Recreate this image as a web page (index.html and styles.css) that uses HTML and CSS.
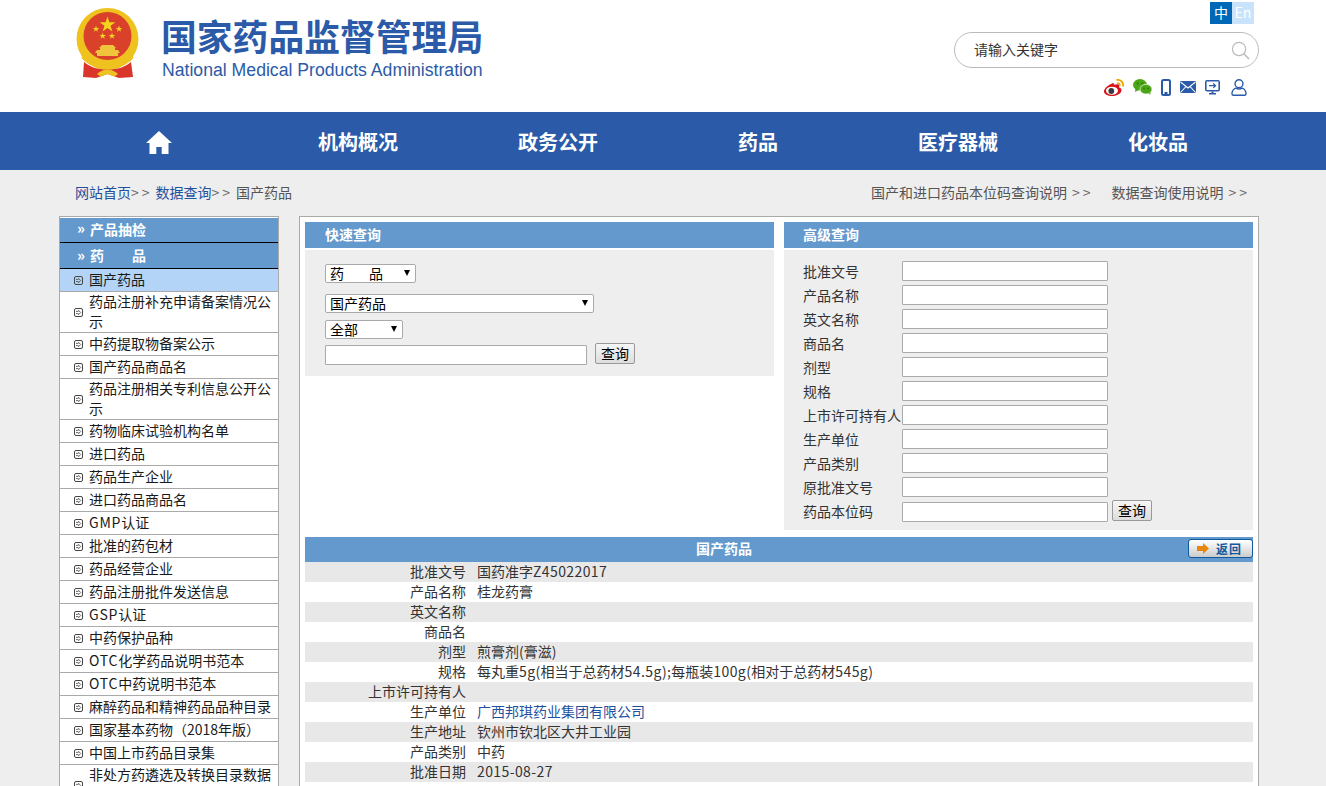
FILE: index.html
```html
<!DOCTYPE html>
<html lang="zh-CN">
<head>
<meta charset="utf-8">
<title>国家药品监督管理局</title>
<link rel="stylesheet" href="styles.css">
</head>
<body>
<svg class="defs" width="0" height="0" aria-hidden="true"><symbol id="go" viewBox="0 0 9 9"><rect x=".5" y=".5" width="8" height="8" rx="1.500" fill="none" stroke="#444"/><path d="M2 3.400h2.500M2 5.600h2.500M4.200 2l2.500 2.500L4.200 7" fill="none" stroke="#444" stroke-width=".8"/></symbol></svg>
<header class="top">
  <div class="brand">
    <svg class="emblem" viewBox="0 0 64 70" aria-hidden="true">
      <circle cx="31.500" cy="31" r="31" fill="#eec21f"/>
      <circle cx="31.500" cy="28" r="24" fill="#d9412b"/>
      <path d="M31.500 8.500l1.900 5.700h6l-4.900 3.500 1.900 5.800-4.900-3.600-4.900 3.600 1.900-5.800-4.900-3.500h6z" fill="#f4d41e"/>
      <path d="M20 17.500l.8 2.400h2.500l-2 1.500.8 2.400-2.100-1.500-2.100 1.500.8-2.400-2-1.500h2.500zM43 17.500l.8 2.400h2.500l-2 1.500.8 2.400-2.100-1.500-2.100 1.500.8-2.400-2-1.500h2.500zM26.700 24.500l.8 2.400h2.500l-2 1.500.8 2.400-2.100-1.500-2.100 1.500.8-2.400-2-1.500h2.500zM36 24.500l.8 2.400h2.500l-2 1.500.8 2.400-2.100-1.500-2.100 1.500.8-2.400-2-1.500h2.500z" fill="#f4d41e"/>
      <path d="M26 37h11l3 3h-1v2h3l2 3H19l2-3h3v-2h-1z" fill="#efc53c"/>
      <path d="M21 45h21v3H21z" fill="#efc53c"/>
      <path d="M7 46c5 7 13 11 24.500 11S51 53 56 46l1.500 4c-6 7-15 10-26 10S11.500 57 5.500 50z" fill="#eec21f"/>
      <path d="M8 54c6 5 13 7.500 23.500 7.500S49 59 55 54l2 15-14 1-11.500-4L20 70 7 69z" fill="#d9352a"/>
      <path d="M21 66c3-3 7-4.500 10.500-4.500S39 63 42 66l-3.500 2.500-7-2.500-7 2.500z" fill="#eec21f"/>
    </svg>
    <div class="brand-text">
      <div class="brand-cn">国家药品监督管理局</div>
      <div class="brand-en">National Medical Products Administration</div>
    </div>
  </div>
  <div class="tools">
    <div class="lang"><a class="lang-cn">中</a><a class="lang-en">En</a></div>
    <div class="search">
      <span class="search-text">请输入关键字</span>
      <svg class="search-icon" viewBox="0 0 20 20" aria-hidden="true"><circle cx="8.500" cy="8.500" r="7" fill="none" stroke="#bbb" stroke-width="1.300"/><path d="M13.500 13.500L19 19" stroke="#bbb" stroke-width="1.600"/></svg>
    </div>
    <div class="icons">
      <svg class="ic ic-weibo" width="21" height="17" viewBox="0 0 21 17" aria-hidden="true"><path d="M8 4.500C4 6 0 9.500 0 12.500 0 15 3.700 17 8 17c5 0 9.500-2.800 9.500-5.800 0-1.700-1.500-2.300-2.500-2.600.5-1.300.5-2.500-.4-3.100-1.200-.7-3.100-.1-4.300.6.100-1.900-.7-2.400-2.300-1.600z" fill="#d8141a"/><ellipse cx="8" cy="11.700" rx="6" ry="4" fill="#fff"/><circle cx="7.300" cy="12" r="2.900" fill="#3a3a3a"/><path d="M12.500 1c3.500-.7 7.500 2 6.500 6.500" fill="none" stroke="#f0a800" stroke-width="1.800"/><path d="M13 4c1.800-.3 3.200 1 2.900 2.800" fill="none" stroke="#f0a800" stroke-width="1.500"/></svg>
      <svg class="ic" width="19" height="16" viewBox="0 0 19 16" aria-hidden="true"><ellipse cx="7" cy="5.800" rx="7" ry="5.800" fill="#4ba516"/><path d="M2.500 9.500L2 13l4-2.200z" fill="#4ba516"/><ellipse cx="13" cy="10.200" rx="6" ry="4.900" fill="#4ba516" stroke="#fff" stroke-width=".7"/><path d="M15.500 14l2 2-.4-3z" fill="#4ba516"/><circle cx="4.700" cy="4.500" r="1" fill="#2f7a08"/><circle cx="9.300" cy="4.500" r="1" fill="#2f7a08"/><circle cx="11" cy="9.500" r=".9" fill="#2f7a08"/><circle cx="15" cy="9.500" r=".9" fill="#2f7a08"/></svg>
      <svg class="ic" width="10" height="17" viewBox="0 0 10 17" aria-hidden="true"><rect x="1" y="1" width="8" height="15" rx="1.500" fill="none" stroke="#2b5ba8" stroke-width="2"/><rect x="3.500" y="13" width="3" height="2.500" fill="#2b5ba8"/></svg>
      <svg class="ic" width="16" height="12" viewBox="0 0 16 12" aria-hidden="true"><rect width="16" height="12" rx="1" fill="#2b5ba8"/><path d="M.5 1L8 7l7.500-6M.5 11.500L6 5.500M15.500 11.500L10 5.500" fill="none" stroke="#fff" stroke-width="1.100"/></svg>
      <svg class="ic" width="15" height="15" viewBox="0 0 15 15" aria-hidden="true"><rect width="15" height="11.500" rx="2" fill="#2b5ba8"/><rect x="1.600" y="1.500" width="11.800" height="8.500" fill="#fff"/><path d="M4 5.700h6.500M8.300 3.500l2.300 2.200-2.300 2.200" fill="none" stroke="#2b5ba8" stroke-width="1.200"/><path d="M6.500 11.500h2V13H11v1.500H4V13h2.500z" fill="#2b5ba8"/></svg>
      <svg class="ic ic-user" width="16" height="17" viewBox="0 0 17 18" aria-hidden="true"><circle cx="8.500" cy="5" r="4.200" fill="none" stroke="#2b5ba8" stroke-width="1.500"/><path d="M1 15.500c0-3.200 2.500-5.400 4-5.800 2 1 5 1 7 0 1.500.4 4 2.600 4 5.800 0 1.500-.8 1.800-1.500 1.800h-12C1.800 17.300 1 17 1 15.500z" fill="none" stroke="#2b5ba8" stroke-width="1.500"/></svg>
    </div>
  </div>
</header>

<nav class="nav">
  <a class="nav-item nav-home"><svg width="26" height="23" viewBox="0 0 26 23" aria-hidden="true"><path d="M13 0L0 12h3.500v11h6.800v-7h5.400v7h6.800V12H26z" fill="#fff"/></svg></a>
  <a class="nav-item">机构概况</a>
  <a class="nav-item">政务公开</a>
  <a class="nav-item">药品</a>
  <a class="nav-item">医疗器械</a>
  <a class="nav-item">化妆品</a>
</nav>

<div class="crumbs">
  <div class="crumbs-left"><a>网站首页</a><span class="sep sep-l">&gt;&gt;</span><a>数据查询</a><span class="sep sep-l">&gt;&gt;</span><em>国产药品</em></div>
  <div class="crumbs-right"><span>国产和进口药品本位码查询说明<span class="sep sep-r">&gt;&gt;</span></span><span>数据查询使用说明<span class="sep sep-r">&gt;&gt;</span></span></div>
</div>

<main class="box">
  <aside class="side">
    <div class="side-head">产品抽检</div>
    <div class="side-head side-head-2">药&emsp;&emsp;品</div>
    <ul class="side-list">
      <li class="on"><svg class="go"><use href="#go"/></svg><span>国产药品</span></li>
      <li><svg class="go"><use href="#go"/></svg><span>药品注册补充申请备案情况公示</span></li>
      <li><svg class="go"><use href="#go"/></svg><span>中药提取物备案公示</span></li>
      <li><svg class="go"><use href="#go"/></svg><span>国产药品商品名</span></li>
      <li><svg class="go"><use href="#go"/></svg><span>药品注册相关专利信息公开公示</span></li>
      <li><svg class="go"><use href="#go"/></svg><span>药物临床试验机构名单</span></li>
      <li><svg class="go"><use href="#go"/></svg><span>进口药品</span></li>
      <li><svg class="go"><use href="#go"/></svg><span>药品生产企业</span></li>
      <li><svg class="go"><use href="#go"/></svg><span>进口药品商品名</span></li>
      <li><svg class="go"><use href="#go"/></svg><span><b class="lat">GMP</b>认证</span></li>
      <li><svg class="go"><use href="#go"/></svg><span>批准的药包材</span></li>
      <li><svg class="go"><use href="#go"/></svg><span>药品经营企业</span></li>
      <li><svg class="go"><use href="#go"/></svg><span>药品注册批件发送信息</span></li>
      <li><svg class="go"><use href="#go"/></svg><span><b class="lat">GSP</b>认证</span></li>
      <li><svg class="go"><use href="#go"/></svg><span>中药保护品种</span></li>
      <li><svg class="go"><use href="#go"/></svg><span><b class="lat">OTC</b>化学药品说明书范本</span></li>
      <li><svg class="go"><use href="#go"/></svg><span><b class="lat">OTC</b>中药说明书范本</span></li>
      <li><svg class="go"><use href="#go"/></svg><span>麻醉药品和精神药品品种目录</span></li>
      <li><svg class="go"><use href="#go"/></svg><span>国家基本药物（2018年版）</span></li>
      <li><svg class="go"><use href="#go"/></svg><span>中国上市药品目录集</span></li>
      <li><svg class="go"><use href="#go"/></svg><span>非处方药遴选及转换目录数据库</span></li>
    </ul>
  </aside>
  <section class="content">
    <div class="panels">
      <div class="panel">
        <h2 class="panel-head">快速查询</h2>
        <form class="quick">
          <div class="sel sel-a"><select><option>药&nbsp;&nbsp;&nbsp;&nbsp;&nbsp;&nbsp;&nbsp;&nbsp;品</option></select></div>
          <div class="sel sel-b"><select><option>国产药品</option></select></div>
          <div class="sel sel-c"><select><option>全部</option></select></div>
          <div class="quick-row"><input class="field field-q" type="text"><button class="btn" type="button">查询</button></div>
        </form>
      </div>
      <div class="panel">
        <h2 class="panel-head panel-head-r">高级查询</h2>
        <form class="adv">
          <label>批准文号</label><input class="field" type="text"><i></i>
          <label>产品名称</label><input class="field" type="text"><i></i>
          <label>英文名称</label><input class="field" type="text"><i></i>
          <label>商品名</label><input class="field" type="text"><i></i>
          <label>剂型</label><input class="field" type="text"><i></i>
          <label>规格</label><input class="field" type="text"><i></i>
          <label>上市许可持有人</label><input class="field" type="text"><i></i>
          <label>生产单位</label><input class="field" type="text"><i></i>
          <label>产品类别</label><input class="field" type="text"><i></i>
          <label>原批准文号</label><input class="field" type="text"><i></i>
          <label>药品本位码</label><input class="field field-last" type="text"><button class="btn" type="button">查询</button>
        </form>
      </div>
    </div>
    <div class="detail-head"><span>国产药品</span>
      <a class="back"><svg width="12" height="11" viewBox="0 0 12 11" aria-hidden="true"><path d="M0 3h6V0l6 5.500L6 11V8H0z" fill="#e8860c"/></svg>返回</a>
    </div>
    <table class="detail">
      <tr><th>批准文号</th><td>国药准字<span class="num">Z45022017</span></td></tr>
      <tr><th>产品名称</th><td>桂龙药膏</td></tr>
      <tr><th>英文名称</th><td></td></tr>
      <tr><th>商品名</th><td></td></tr>
      <tr><th>剂型</th><td>煎膏剂(膏滋)</td></tr>
      <tr><th>规格</th><td>每丸重<span class="num">5g(</span>相当于总药材<span class="num">54.5g);</span>每瓶装<span class="num">100g(</span>相对于总药材<span class="num">545g)</span></td></tr>
      <tr><th>上市许可持有人</th><td></td></tr>
      <tr><th>生产单位</th><td><a>广西邦琪药业集团有限公司</a></td></tr>
      <tr><th>生产地址</th><td>钦州市钦北区大井工业园</td></tr>
      <tr><th>产品类别</th><td>中药</td></tr>
      <tr><th>批准日期</th><td><span class="num">2015-08-27</span></td></tr>
    </table>
  </section>
</main>
</body>
</html>
```
FILE: styles.css
```css
* { box-sizing: border-box; }
html, body { margin: 0; height: 786px; overflow: hidden; }
body { background: #eee; color: #333; font: 14px/20px "Noto Sans CJK SC", "Liberation Sans", sans-serif; }
a { color: inherit; text-decoration: none; }
.defs { position: absolute; }

.top { height: 112px; background: #fff; display: flex; justify-content: space-between; padding: 0 67px 0 76px; }
.brand { display: flex; align-items: flex-start; gap: 22px; padding-top: 8px; }
.emblem { width: 64px; height: 70px; }
.brand-text { color: #2b5ba8; padding-top: 6px; }
.brand-cn { font-size: 35.800px; line-height: 42px; font-weight: 700; white-space: nowrap; margin-left: -1px; }
.brand-en { font: 17.650px/20px "Liberation Sans", sans-serif; margin-top: 4px; white-space: nowrap; }

.tools { width: 305px; display: flex; flex-direction: column; align-items: flex-end; }
.lang { display: flex; margin: 2px 5px 0 0; height: 22px; width: 44px; font-size: 14px; line-height: 21px; text-align: center; color: #fff; }
.lang a { flex: 1; }
.lang-cn { background: #0068b7; }
.lang-en { background: #c8e3fb; }
.search { width: 305px; height: 36px; margin-top: 8px; border: 1px solid #bbb; border-radius: 18px; display: flex; align-items: center; justify-content: space-between; padding: 0 8px 0 19px; }
.search-text { color: #333; font-size: 14px; margin-bottom: 2px; }
.search-icon { width: 19px; height: 19px; margin-top: 1px; }
.icons { display: flex; align-items: center; gap: 9px; margin: 10px 12px 0 0; height: 18px; }
.ic { display: block; }
.ic-weibo { margin-right: -1px; }
.ic-user { margin-left: 2px; }

.nav { height: 58px; background: #2b5ba8; display: grid; grid-template-columns: repeat(6, 200px); padding-left: 58px; }
.nav-item { color: #fff; font-size: 20px; font-weight: 700; line-height: 60px; text-align: center; }
.nav-home { display: flex; align-items: center; justify-content: center; padding-left: 2px; }

.crumbs { height: 46px; padding: 12px 76px 0 75px; display: flex; justify-content: space-between; color: #555; }
.crumbs-left a { color: #1f519f; }
.crumbs-left em { font-style: normal; }
.crumbs-right { display: flex; gap: 18px; }
.sep { letter-spacing: 3px; color: #666; }
.sep-l { margin-right: 3px; }
.sep-r { margin-left: 5px; }

.box { margin: 0 67px 0 59px; height: 600px; display: flex; gap: 20px; }
.side { width: 220px; flex: none; padding-top: 1px; background: #fff; border: 1px solid #aaa; overflow: hidden; }
.side-head { height: 25px; background: #6399cc; color: #fff; font-weight: 700; padding-left: 30px; line-height: 22px; position: relative; border-bottom: 1px solid #000; white-space: nowrap; }
.side-head::before { content: "»"; position: absolute; left: 17px; top: -1px; font-size: 15px; }
.side-head-2 { height: 26px; line-height: 25px; }
.side-list { list-style: none; margin: 0; padding: 0; color: #1a1a1a; }
.side-list li { border-bottom: 1px solid #aaa; padding-left: 14px; min-height: 23px; line-height: 20px; background: #fff; display: flex; align-items: center; }
.side-list li span { margin: -1px 0 1px; }
.side-list .lat { font-weight: 400; letter-spacing: .8px; }
.go { width: 9px; height: 9px; flex: none; margin-right: 6px; }
.side-list .on { background: #b3d4f7; }

.content { flex: 1; min-width: 0; background: #fff; border: 1px solid #aaa; padding: 5px 5px 0; }
.panels { display: grid; grid-template-columns: 469px 469px; gap: 10px; }
.panel-head { margin: 0; height: 26px; background: #6399cc; color: #fff; font-size: 14px; line-height: 25px; font-weight: 700; padding-left: 20px; }
.panel-head-r { padding-left: 19px; }
.quick { margin-top: 2px; height: 126px; background: #eee; padding: 14px 0 0 20px; color: #000; }
.sel { position: relative; height: 19px; }
.sel select { appearance: none; height: 19px; width: 100%; display: block; background: #fff; border: 1px solid #aaa; border-radius: 2px; font: 14px/17px "Noto Sans CJK SC", sans-serif; padding: 0 0 0 4px; color: #000; }
.sel::after { content: ""; position: absolute; top: 6px; right: 6.500px; border-left: 3.500px solid transparent; border-right: 3.500px solid transparent; border-top: 6px solid #000; pointer-events: none; }
.sel-a { width: 91px; margin-bottom: 11px; }
.sel-b { width: 269px; margin-bottom: 7px; }
.sel-c { width: 78px; margin-bottom: 4px; }
.quick-row { display: flex; align-items: flex-start; gap: 8px; }
.field { height: 20px; background: #fff; border: 1px solid #aaa; border-radius: 1px; padding: 0 2px; display: block; }
.field-q { width: 262px; margin-top: 2px; }
.field-last { margin-top: 1px; }
.btn { width: 40px; height: 21px; padding: 0; border: 1px solid #999; border-radius: 2px; background: linear-gradient(#f6f6f6, #ddd); font: 14px/19px "Noto Sans CJK SC", sans-serif; color: #000; }

.adv { height: 280px; background: #eee; margin-top: 2px; padding: 11px 0 0 19px; display: grid; grid-template-columns: 99px 206px 44px; grid-auto-rows: 24px; color: #333; align-items: start; }
.adv label { line-height: 20px; white-space: nowrap; }
.adv .btn { margin: -1px 0 0 4px; }

.detail-head { height: 25px; margin-top: 7px; background: #6399cc; color: #fff; font-weight: 700; text-align: center; line-height: 23px; position: relative; padding-right: 110px; }
.back { position: absolute; right: 0; top: 2px; width: 65px; height: 19px; border: 1px solid #0f5a9e; border-radius: 3px; background: linear-gradient(#fff, #ccc); color: #0f5a9e; font-size: 12px; line-height: 15px; letter-spacing: 1px; display: flex; align-items: center; gap: 7px; padding-left: 8px; }
.detail { width: 100%; border-collapse: collapse; table-layout: fixed; color: #333; }
.detail tr { height: 20px; }
.detail tr:nth-child(odd) { background: #e8e8e8; }
.detail th, .detail td { line-height: 18px; padding-bottom: 2px; }
.detail th { width: 161px; font-weight: 400; text-align: right; padding-left: 0; padding-right: 0; padding-top: 0; }
.detail td { padding-left: 11px; padding-right: 0; padding-top: 0; }
.detail a { color: #1f519f; }
.num { letter-spacing: .4px; }
```
